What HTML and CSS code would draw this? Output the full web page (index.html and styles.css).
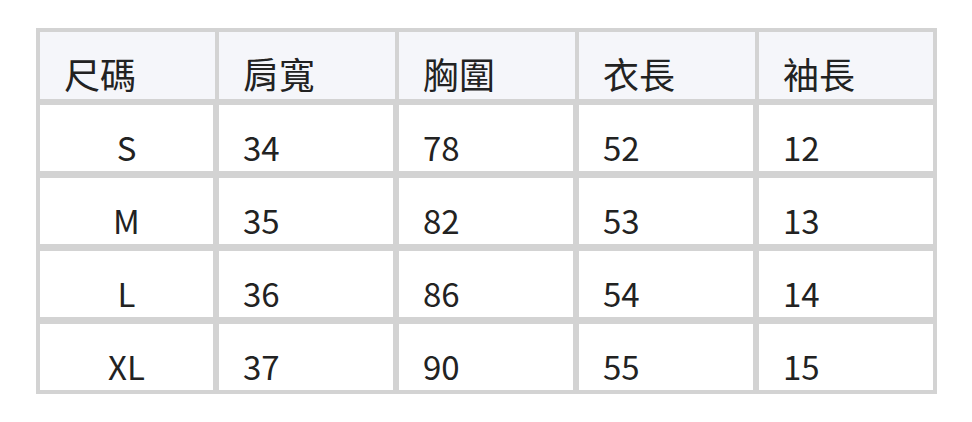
FILE: index.html
```html
<!DOCTYPE html>
<html lang="zh-Hant">
<head>
<meta charset="utf-8">
<title>尺寸表</title>
<link rel="stylesheet" href="styles.css">
</head>
<body>
<div class="wrap">
<table class="size-table">
  <colgroup>
    <col class="c1"><col class="c2"><col class="c3"><col class="c4"><col class="c5">
  </colgroup>
  <thead>
    <tr><th>尺碼</th><th>肩寬</th><th>胸圍</th><th>衣長</th><th>袖長</th></tr>
  </thead>
  <tbody>
    <tr><td>S</td><td>34</td><td>78</td><td>52</td><td>12</td></tr>
    <tr><td>M</td><td>35</td><td>82</td><td>53</td><td>13</td></tr>
    <tr><td>L</td><td>36</td><td>86</td><td>54</td><td>14</td></tr>
    <tr><td>XL</td><td>37</td><td>90</td><td>55</td><td>15</td></tr>
  </tbody>
</table>
</div>
</body>
</html>
```
FILE: styles.css
```css
html, body {
  margin: 0;
  padding: 0;
  background: #ffffff;
}

.wrap {
  padding: 28px 0 0 36px;
}

.size-table {
  box-sizing: border-box;
  width: 901px;
  table-layout: fixed;
  border-collapse: separate;
  border-spacing: 0;
  border: 4px solid #d3d3d3;
  background: #d3d3d3;
  font-family: "Noto Sans CJK TC", "Noto Sans", sans-serif;
  font-size: 33px;
  color: #222222;
}

.c1 { width: 179px; }
.c2, .c3, .c4 { width: 180px; }
.c5 { width: 174px; }

.size-table th,
.size-table td {
  padding: 0 0 0 24px;
  text-align: left;
  font-weight: 400;
  vertical-align: bottom;
  white-space: nowrap;
}

.size-table th {
  padding-top: 15px;
  font-size: 36px;
  line-height: 52px;
  background: #f5f6fa;
  border-right: 4px solid #d3d3d3;
  border-bottom: 6px solid #d3d3d3;
}

.size-table td {
  padding-top: 18px;
  line-height: 48px;
  background: #ffffff;
  border-right: 6px solid #d3d3d3;
  border-bottom: 7px solid #d3d3d3;
}

.size-table th:last-child,
.size-table td:last-child {
  border-right: 0;
}

.size-table tbody tr:last-child td {
  border-bottom: 0;
}

.size-table td:first-child {
  text-align: center;
  padding-left: 0;
}
```
